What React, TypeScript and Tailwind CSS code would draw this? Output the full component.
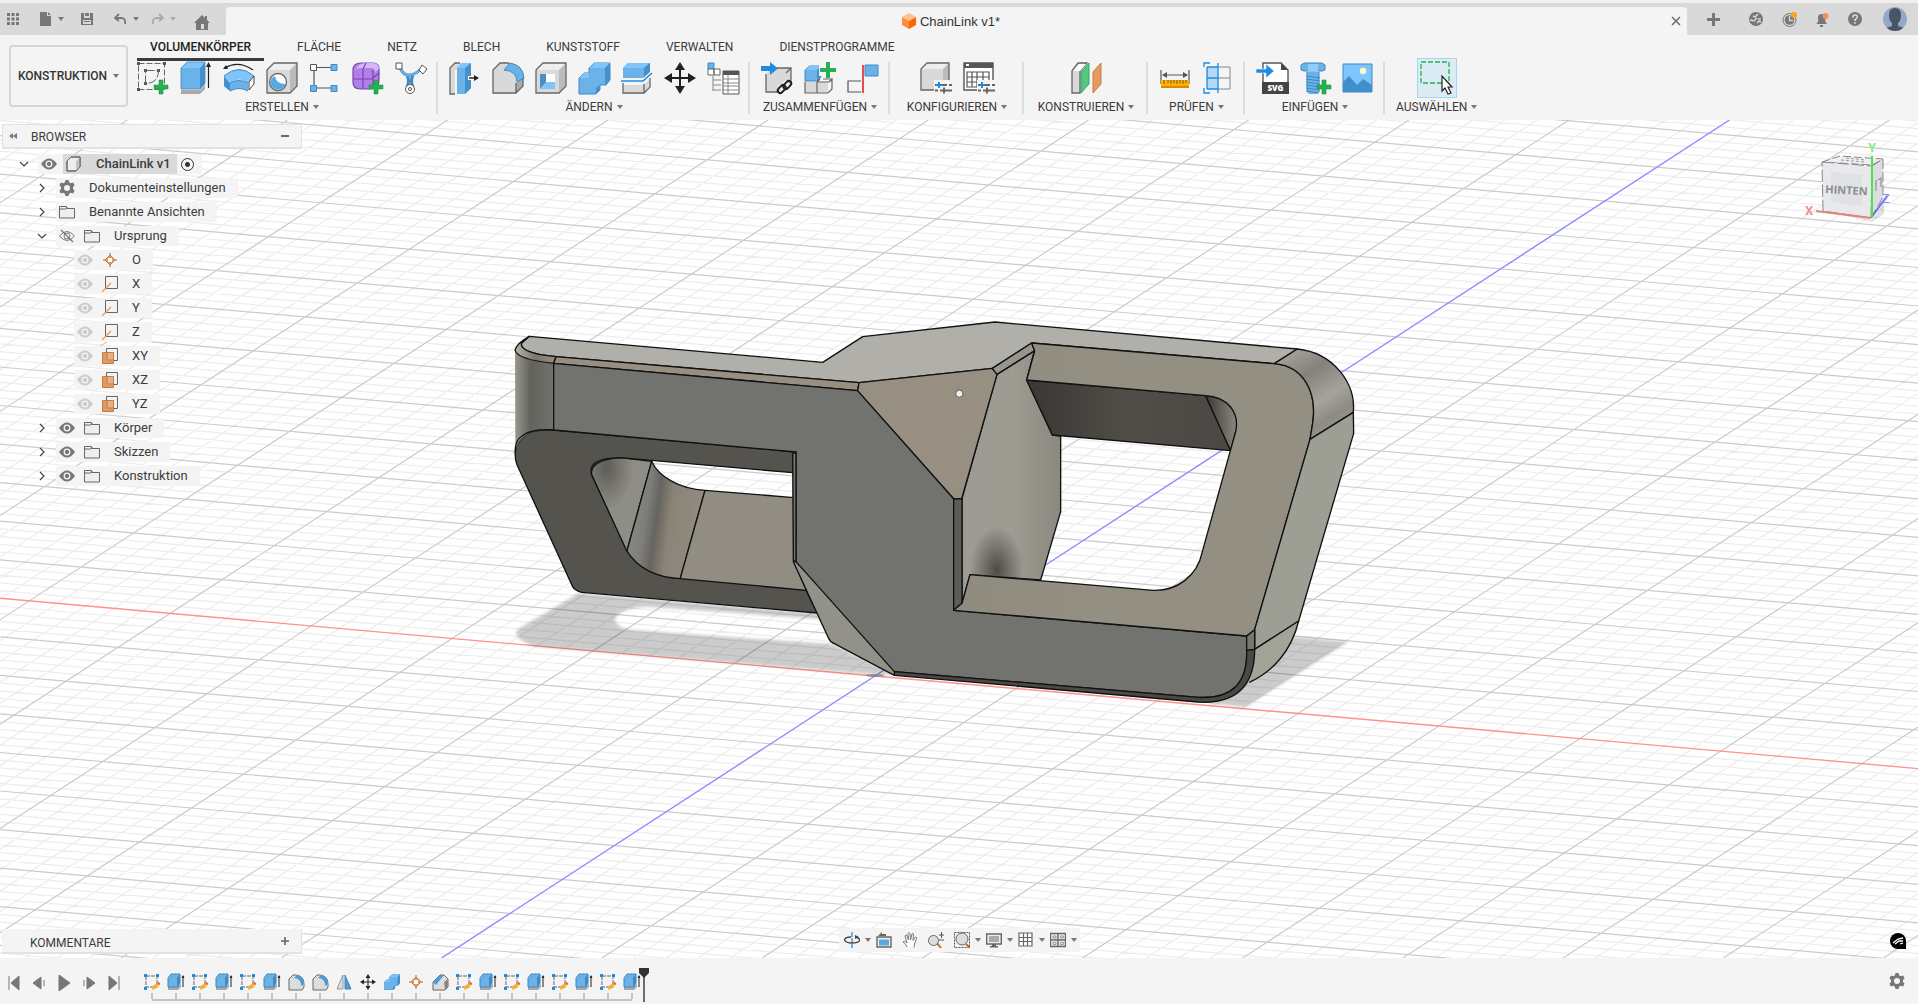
import { useState, type ReactNode } from "react";
import { clsx } from "clsx";

const tabs = [
  "VOLUMENKÖRPER",
  "FLÄCHE",
  "NETZ",
  "BLECH",
  "KUNSTSTOFF",
  "VERWALTEN",
  "DIENSTPROGRAMME",
];

/* ---------- ribbon icons, 32x32 ---------- */

const Plus = ({ x, y }: { x: number; y: number }) => (
  <path
    d={`M${x + 5} ${y}h4v5h5v4h-5v5h-4v-5h-5v-4h5z`}
    fill="#26b050"
    stroke="#1f9a45"
    strokeWidth=".6"
  />
);

const Sliders = () => (
  <>
    <path d="M14 18h18v14h-18z" fill="#f4f4f4" />
    <path d="M15 23h12M20 28.5h12M29 23h3M15 28.5h3" stroke="#666" strokeWidth="1.8" />
    <path d="M24 25.5v6" stroke="#666" strokeWidth="2" />
    <path d="M19 20v6M16 23h6" stroke="#1b8be4" strokeWidth="2" />
  </>
);

const icons: Record<string, ReactNode> = {
  sketch: (
    <>
      <path d="M1.5 1.5h26v26h-26z" fill="none" stroke="#666" strokeDasharray="6 2" />
      <path d="M0 0h3v3H0zM26 0h3v3h-3zM0 26h3v3H0zM7 7h3v3H7zM20 7h3v3h-3zM7 20h3v3H7z" fill="#555" />
      <path d="M8.5 8.5h13q0 13-13 13z" fill="none" stroke="#666" strokeDasharray="9 2" />
      <Plus x={17} y={18} />
    </>
  ),
  extrude: (
    <>
      <path d="M1 28h19l5-5v4l-5 5H1z" fill="#aaa" />
      <path d="M1 6l6-6h18l-5 6z" fill="#7fc4fb" />
      <path d="M20 6l5-6v22l-5 5z" fill="#4590cb" />
      <path d="M1 6h19v21H1z" fill="#6ab2e8" />
      <path d="M1 6l6-6h18v21l-5 6H1z" fill="none" stroke="#3f8ac4" strokeWidth=".8" />
      <path d="M28.5 26V3" stroke="#222" strokeWidth="1.2" />
      <path d="M26 5l2.5-5 2.5 5z" fill="#222" />
    </>
  ),
  revolve: (
    <>
      <path d="M1 14q15-13 30 0l-6 7q-9-7-17 0z" fill="#7fc4fb" />
      <path d="M1 14l6 7v8l-6-5zM7 21q9-5 18 0v8q-9-5-18 0z" fill="#6ab2e8" />
      <path d="M1 14l6 7v8l-6-5z" fill="#4590cb" />
      <path d="M1 14q15-13 30 0M7 21q9-5 18 0M7 29q9-5 18 0" fill="none" stroke="#3f8ac4" />
      <path d="M26 20l5-6v8l-5 6z" fill="#fff" stroke="#444" />
      <path d="M2 6q13-8 28 2" fill="none" stroke="#222" strokeWidth="1.2" />
      <path d="M0 7l3-4 2 4z" fill="#222" />
    </>
  ),
  hole: (
    <>
      <path d="M1 8l7-7h23l-7 7z" fill="#eee" />
      <path d="M24 8l7-7v23l-7 7z" fill="#bbb" />
      <path d="M1 8h23v23H1z" fill="#d9d9d9" />
      <path d="M1 8l7-7h23v23l-7 7H1z" fill="none" stroke="#666" strokeWidth="1.3" />
      <circle cx="12" cy="20" r="8.5" fill="#fff" stroke="#666" strokeWidth="1.3" />
      <path d="M9 14q1 8 11 8a8 7 0 1 1-11-8z" fill="#5aa8e2" />
    </>
  ),
  pattern: (
    <>
      <path d="M5 8v16M8 5.5h14M8 26h14" stroke="#555" strokeWidth="1.2" />
      <path d="M1.5 2.5h6v6h-6z" fill="#fff" stroke="#555" />
      <path d="M22 2.5h6v6h-6zM1.5 23.5h6v6h-6zM22 23.5h6v6h-6z" fill="#6ab2e8" stroke="#3f8ac4" />
    </>
  ),
  form: (
    <>
      <path d="M1 8q0-7 8-7h12q6 0 6 6v11q0 9-9 9H8q-7 0-7-7z" fill="#b27fe8" stroke="#7445ab" strokeWidth="1.2" />
      <path d="M6 4q3-3 9-3h6q6 0 6 6l-4 3q0-4-4-4H8q-3 0-5 3z" fill="#d7b6f8" />
      <path d="M2 17h18l7-6M11 7v20M14 1l-3 6M21 8v18" fill="none" stroke="#7445ab" strokeWidth="1.2" />
      <Plus x={17} y={18} />
    </>
  ),
  generative: (
    <>
      <path d="M5 6q4 8 10 7t11-6M12 13q3 6 0 12M18 13q-3 6 0 12" fill="none" stroke="#3f8ac4" strokeWidth="3" />
      <path d="M5 6q4 8 10 7t11-6" fill="none" stroke="#6ab2e8" strokeWidth="1.8" />
      <path d="M1 1h6v6H1zM27 3l5 4-4 5-4-4z" fill="#fff" stroke="#555" />
      <circle cx="15" cy="27" r="4.5" fill="#fff" stroke="#555" />
      <circle cx="15" cy="27" r="1.5" fill="none" stroke="#555" />
    </>
  ),
  presspull: (
    <>
      <path d="M1 6l5-5h6v5L6 8v24H1z" fill="#d9d9d9" />
      <path d="M6 32H1V6l5-5h5" fill="none" stroke="#666" strokeWidth="1.3" />
      <path d="M8 6l5-5h9v25l-6 6H8z" fill="#6ab2e8" />
      <path d="M8 6l5-5h9l-6 5z" fill="#7fc4fb" />
      <path d="M16 6l6-5v25l-6 6z" fill="#4590cb" />
      <path d="M19 16h7" stroke="#fff" strokeWidth="4" />
      <path d="M20 16h6" stroke="#222" strokeWidth="1.5" />
      <path d="M25 13l5 3-5 3z" fill="#222" />
    </>
  ),
  fillet: (
    <>
      <path d="M1 8l7-7h9q14 2 14 15v8l-7 7H1z" fill="#d9d9d9" />
      <path d="M24 21l7-5v8l-7 7z" fill="#aaa" />
      <path d="M12 8l6-7q13 2 14 15l-7 4Q25 9 12 8z" fill="#6ab2e8" stroke="#3f8ac4" />
      <path d="M17 1H8L1 8v23h23l7-7v-8M24 31V21" fill="none" stroke="#666" strokeWidth="1.3" />
    </>
  ),
  shell: (
    <>
      <path d="M1 8l7-7h23l-7 7z" fill="#eee" />
      <path d="M24 8l7-7v23l-7 7z" fill="#bbb" />
      <path d="M1 8h23v23H1z" fill="#d9d9d9" />
      <path d="M1 8l7-7h23v23l-7 7H1z" fill="none" stroke="#666" strokeWidth="1.3" />
      <path d="M5 12h15v15H5z" fill="#fff" />
      <path d="M5 12h6v9l-6 6z" fill="#4590cb" />
      <path d="M5 27l6-7h9v7z" fill="#7fc4fb" />
    </>
  ),
  combine: (
    <>
      <path d="M11 6l5-5h16v17l-4 5h-6v5l-4 4H1V16l5-5h5z" fill="#6ab2e8" stroke="#3f8ac4" />
      <path d="M11 6l5-5h16l-5 5zM1 16l5-5h5v5z" fill="#7fc4fb" />
      <path d="M27 6l5-5v17l-5 5zM18 26l4-3v5l-4 4z" fill="#4590cb" />
    </>
  ),
  split: (
    <>
      <path d="M2 23h20l6-5v6l-5 7H2z" fill="#d9d9d9" />
      <path d="M2 17v14h21l6-6v-9M23 31v-9" fill="none" stroke="#666" strokeWidth="1.3" />
      <path d="M2 6l5-5h22v9l-6 6H2z" fill="#6ab2e8" />
      <path d="M2 6l5-5h22l-6 5z" fill="#7fc4fb" />
      <path d="M23 6l6-5v9l-6 6z" fill="#4590cb" />
      <path d="M0 19h22l9-8" fill="none" stroke="#f4f4f4" strokeWidth="4" />
      <path d="M0 19h22l9-8" fill="none" stroke="#1b8be4" strokeWidth="1.6" />
    </>
  ),
  move: (
    <>
      <path d="M16 5v22M5 16h22" stroke="#222" strokeWidth="2" />
      <path d="M16 0l5 8H11zM16 32l5-8H11zM0 16l8-5v10zM32 16l-8-5v10z" fill="#222" />
    </>
  ),
  params: (
    <>
      <path d="M1 1h6v6H1z" fill="#6ab2e8" stroke="#3f8ac4" />
      <path d="M1 7h6v6H1zM7 7h6v6H7z" fill="#fff" stroke="#666" />
      <path d="M6 14v15M6 18h8M6 23h8M6 28h8" fill="none" stroke="#888" />
      <path d="M16 9h16v23H16z" fill="#fff" stroke="#555" />
      <path d="M16 9h16v4H16z" fill="#555" />
      <path d="M16 17h16M16 21h16M16 24h16M16 28h16M21 13v19" stroke="#888" />
    </>
  ),
  insertlink: (
    <>
      <path d="M5 12l5-6h20v17l-5 6H5z" fill="#d9d9d9" />
      <path d="M5 12v18h12M14 6h16v14M25 11l5-5" fill="none" stroke="#666" strokeWidth="1.3" />
      <path d="M0 4h9V0l8 6.5L9 13V9H0z" fill="#1b8be4" />
      <path d="M20 28L28 22" stroke="#f4f4f4" strokeWidth="10" />
      <g fill="none" stroke="#222" strokeWidth="2">
        <rect x="16" y="25" width="9" height="5" rx="2.5" transform="rotate(-45 20 27)" />
        <rect x="22" y="20" width="9" height="5" rx="2.5" transform="rotate(-45 27 23)" />
      </g>
    </>
  ),
  component: (
    <>
      <path d="M1 20h27v-3l-4 3v11H1z" fill="#d9d9d9" />
      <path d="M1 20v11h23l4-4V17M13 20v11M13 20h12l3-3h-9M13 20l3-3" fill="none" stroke="#666" strokeWidth="1.2" />
      <path d="M1 8l4-4h12v11l-4 4H1z" fill="#6ab2e8" stroke="#3f8ac4" />
      <path d="M1 8l4-4h12l-4 4z" fill="#7fc4fb" />
      <path d="M13 8l4-4v11l-4 4z" fill="#4590cb" />
      <path d="M15 3h18v11H15z" fill="#f4f4f4" />
      <path d="M22 0h4v6h6v4h-6v6h-4v-6h-6V6h6z" fill="#26b050" />
    </>
  ),
  joint: (
    <>
      <path d="M18 3h13v11H18z" fill="#6ab2e8" stroke="#3f8ac4" />
      <path d="M14 19H1v11h13" fill="none" stroke="#555" strokeWidth="1.2" />
      <path d="M16 3v28" stroke="#d22" strokeWidth="1.6" />
    </>
  ),
  configure: (
    <>
      <path d="M1 7l6-6h22l-6 6z" fill="#eee" />
      <path d="M23 7l6-6v20l-6 7z" fill="#bbb" />
      <path d="M1 7h22v21H1z" fill="#d9d9d9" />
      <path d="M23 28H1V7l6-6h22v21" fill="none" stroke="#666" strokeWidth="1.3" />
      <Sliders />
    </>
  ),
  configtable: (
    <>
      <path d="M1 1h29v27H1z" fill="#fff" stroke="#555" strokeWidth="1.4" />
      <path d="M1 1h29v5H1z" fill="#555" />
      <path d="M3 2h3v2H3z" fill="#fff" />
      <path d="M4 10h22v15H4zM4 15h22M4 20h22M9 10v15M14 10v15M20 10v15" fill="none" stroke="#555" strokeWidth="1.2" />
      <Sliders />
    </>
  ),
  plane: (
    <>
      <path d="M2 9l6-8h9l-7 8v22H2z" fill="#d9d9d9" stroke="#666" strokeWidth="1.3" />
      <path d="M3 9l6-7h7l-6 7z" fill="#fff" />
      <path d="M11 10l8-9v21l-8 9z" fill="#57c77f" stroke="#3aa563" />
      <path d="M23 10l8-9v21l-8 9z" fill="#e69a62" stroke="#c67a43" />
    </>
  ),
  measure: (
    <>
      <path d="M2 8v14M30 8v14M4 13h24" stroke="#555" strokeWidth="1.2" />
      <path d="M3 13l5-3v6zM29 13l-5-3v6z" fill="#555" />
      <path d="M2 18h28v7H2z" fill="#ffaf0a" />
      <path d="M2 24h28v2H2z" fill="#d98a00" />
      <path d="M5 18v4M9 18v3M12 18v4M15 18v3M18 18v4M21 18v3M24 18v4M27 18v3" stroke="#7a5a10" />
    </>
  ),
  interference: (
    <>
      <path d="M16 5h12v22H16M16 16h12" fill="none" stroke="#888" />
      <path d="M5 5h11v22H5z" fill="#b4d8f5" />
      <path d="M8 1H2v4M2 26v5h6M5 5h11M5 16h11M5 27h11M5 5v22M16 1v30" fill="none" stroke="#1b8be4" strokeWidth="1.3" />
    </>
  ),
  svg: (
    <>
      <path d="M7 1h18l7 7v23H7z" fill="#fff" stroke="#555" strokeWidth="1.4" />
      <path d="M25 1v7h7z" fill="#444" />
      <path d="M6 20h27v12H6z" fill="#444" />
      <path d="M0 7h10V2l8 7-8 7v-5H0z" fill="#1b8be4" stroke="#f4f4f4" strokeWidth=".6" />
      <text x="19.5" y="29" textAnchor="middle" className="font-['Open_Sans'] text-[8px] font-extrabold" fill="#fff">
        SVG
      </text>
    </>
  ),
  screw: (
    <>
      <path d="M2 3l3-2h18l3 2v5l-3 1H5L2 8z" fill="#6ab2e8" stroke="#3f8ac4" />
      <path d="M9 2h10v7H9z" fill="#90cdfa" />
      <path d="M8 10h12v20l-2 2h-8l-2-2z" fill="#6ab2e8" />
      <path d="M7 14l14 2M7 17l14 2M7 20l14 2M7 23l14 2M7 26l14 2M8 29l12 2M8 10v20M20 10v20" stroke="#3f8ac4" />
      <Plus x={18} y={18} />
    </>
  ),
  image: (
    <>
      <path d="M1 2h29v28H1z" fill="#7fc4fb" stroke="#3f8ac4" />
      <circle cx="21" cy="9" r="3.2" fill="#fffbd0" />
      <path d="M1 20l6-6 8 9 6-6 9 6v7H1z" fill="#3f8fcb" />
    </>
  ),
  select: (
    <>
      <path d="M0 0h28v21H0z" fill="none" stroke="#26b050" strokeWidth="1.3" strokeDasharray="5 2" />
      <path d="M21 14v15l3-3 3 6 3-1-3-6h4z" fill="#fff" stroke="#222" strokeWidth="1.2" />
    </>
  ),
};

const groups = [
  { label: "ERSTELLEN", tools: ["sketch", "extrude", "revolve", "hole", "pattern", "form", "generative"] },
  { label: "ÄNDERN", tools: ["presspull", "fillet", "shell", "combine", "split", "move", "params"] },
  { label: "ZUSAMMENFÜGEN", tools: ["insertlink", "component", "joint"] },
  { label: "KONFIGURIEREN", tools: ["configure", "configtable"], width: "min-w-[134px]" },
  { label: "KONSTRUIEREN", tools: ["plane"], width: "min-w-[124px]" },
  { label: "PRÜFEN", tools: ["measure", "interference"] },
  { label: "EINFÜGEN", tools: ["svg", "screw", "image"] },
  { label: "AUSWÄHLEN", tools: ["select"] },
];

const Caret = ({ className = "text-[#777]" }: { className?: string }) => (
  <svg viewBox="0 0 6 4" className={clsx("h-1 w-1.5 shrink-0", className)}>
    <path d="M0 0h6L3 4z" fill="currentColor" />
  </svg>
);

/* ---------- title bar ---------- */

function TitleBar() {
  return (
    <div className="border-t-[3px] border-[#f0f0f0] bg-[#d9d9d9] text-[#777]">
      <div className="flex h-8 items-stretch">
        <div className="flex w-[226px] shrink-0 items-center pl-[7px]">
          <button aria-label="Datenbereich">
            <svg viewBox="0 0 12 12" className="size-3" fill="currentColor">
              <path d="M0 0h3v3H0zM4.5 0h3v3h-3zM9 0h3v3H9zM0 4.5h3v3H0zM4.5 4.5h3v3h-3zM9 4.5h3v3H9zM0 9h3v3H0zM4.5 9h3v3h-3zM9 9h3v3H9z" />
            </svg>
          </button>
          <button aria-label="Datei" className="ml-5 flex items-center gap-1.5">
            <svg viewBox="0 0 13 14" className="h-3.5 w-[13px]" fill="currentColor">
              <path d="M1 0h7v4h4v10H1zM9 0l3 3H9z" />
            </svg>
            <Caret />
          </button>
          <button aria-label="Speichern" className="ml-4">
            <svg viewBox="0 0 14 14" className="size-3.5" fill="currentColor">
              <path fillRule="evenodd" d="M1 1h3v5h6V1h3v12H1zM5 1h4v3H5zM3 8v4h8V8zM4 9h6v1H4z" />
            </svg>
          </button>
          <button aria-label="Rückgängig" className="ml-5 flex items-center gap-1.5">
            <svg viewBox="0 0 13 12" className="h-3 w-[13px]" fill="none" stroke="currentColor" strokeWidth="1.8">
              <path d="M5 1L1 5l4 3M1 5h6q5 0 4 6" />
            </svg>
            <Caret />
          </button>
          <button aria-label="Wiederholen" className="ml-3 flex items-center gap-1.5 text-[#aaa]">
            <svg viewBox="0 0 13 12" className="h-3 w-[13px]" fill="none" stroke="currentColor" strokeWidth="1.8">
              <path d="M8 1l4 4-4 3M12 5H6q-5 0-4 6" />
            </svg>
            <Caret className="text-[#aaa]" />
          </button>
          <button aria-label="Startseite" className="mt-1.5 ml-[18px]">
            <svg viewBox="0 0 16 15" className="h-[15px] w-4" fill="currentColor">
              <path fillRule="evenodd" d="M8 0l3 3V1h2v4l3 3h-2v7H2V8H0zM7 9v5h3V9z" />
            </svg>
          </button>
        </div>

        <div className="mt-1 flex flex-1 items-center rounded-t bg-[#f4f4f4] pr-[7px] pl-2.5">
          <div className="flex flex-1 items-center justify-center gap-1 pr-1.5">
            <svg viewBox="0 0 14 16" className="h-4 w-3.5">
              <path d="M7 0l7 4-7 4-7-4z" fill="#ffc08f" />
              <path d="M0 4l7 4v8l-7-4z" fill="#ff8d3c" />
              <path d="M14 4L7 8v8l7-4z" fill="#f46a00" />
            </svg>
            <span className="pt-px font-['Liberation_Sans',sans-serif] text-[#333]">ChainLink v1*</span>
          </div>
          <button aria-label="Schließen">
            <svg viewBox="0 0 8 8" className="size-2 overflow-visible" stroke="#666" strokeWidth="1.4">
              <path d="M0 0l8 8M8 0L0 8" />
            </svg>
          </button>
        </div>

        <div className="flex w-[231px] shrink-0 items-center pl-5">
          <button aria-label="Neue Konstruktion" className="w-[42px]">
            <svg viewBox="0 0 13 13" className="size-[13px]" stroke="currentColor" strokeWidth="3">
              <path d="M6.5 0v13M0 6.5h13" />
            </svg>
          </button>
          <button aria-label="Erweiterungen" className="w-[33px]">
            <svg viewBox="0 0 14 14" className="size-3.5">
              <circle cx="7" cy="7" r="7" fill="currentColor" />
              <path d="M1 8l4 1M5 9l3-3M4 4l2 1 3-3M9 7h3M8 11l2-2 2 1" stroke="#d9d9d9" strokeWidth="1.5" fill="none" />
            </svg>
          </button>
          <button aria-label="Auftragsstatus" className="w-[33px]">
            <svg viewBox="0 0 15 15" className="size-[15px]">
              <circle cx="7.5" cy="8" r="6.5" fill="#d9d9d9" stroke="currentColor" />
              <circle cx="7.5" cy="8" r="4.8" fill="currentColor" />
              <path d="M7.5 4v4.5H11" stroke="#d9d9d9" strokeWidth="1.3" fill="none" />
              <circle cx="12" cy="3" r="3" fill="#ffa21f" />
            </svg>
          </button>
          <button aria-label="Benachrichtigungen" className="w-[33px]">
            <svg viewBox="0 0 14 15" className="h-[15px] w-3.5">
              <path d="M1 12q3-2 2-6 0-4 3.5-4T10 6q0 4 2 6zM5 13h3v2H5z" fill="currentColor" />
              <circle cx="10.5" cy="4" r="3" fill="#ff8a4f" />
            </svg>
          </button>
          <button aria-label="Hilfe" className="w-[35px]">
            <svg viewBox="0 0 14 14" className="size-3.5">
              <circle cx="7" cy="7" r="7" fill="currentColor" />
              <path d="M4.8 5.5q0-2.5 2.3-2.5t2.2 2.1Q9.3 6.5 7 7.6V9M7 10v1.8" stroke="#d9d9d9" strokeWidth="1.6" fill="none" />
            </svg>
          </button>
          <button aria-label="Profil">
            <svg viewBox="0 0 24 24" className="size-6">
              <clipPath id="avatar">
                <circle cx="12" cy="12" r="12" />
              </clipPath>
              <g clipPath="url(#avatar)">
                <path d="M0 0h24v24H0z" fill="#94a9c7" />
                <path d="M6 8q0-7 6-7t6 7q0 6-3 8v3l6 2v4H3v-4l6-2v-3Q6 14 6 8z" fill="#475566" />
              </g>
            </svg>
          </button>
        </div>
      </div>
    </div>
  );
}

/* ---------- ribbon ---------- */

function Ribbon() {
  const [active, setActive] = useState(tabs[0]);

  return (
    <div className="flex h-[85px] bg-[#f4f4f4] text-xs">
      <div className="shrink-0 px-[9px] py-2.5">
        <button className="flex h-[62px] w-[119px] items-center justify-center gap-1.5 rounded border-2 border-[#d6d6d6] font-medium text-[#333]">
          KONSTRUKTION <Caret />
        </button>
      </div>
      <div>
        <nav className="flex gap-5">
          {tabs.map((tab) => (
            <button
              key={tab}
              onClick={() => setActive(tab)}
              className={clsx(
                "h-[26px] border-b-[3px] px-[13px] leading-6",
                tab === active ? "border-[#3c3c3c] font-medium text-[#222]" : "border-transparent",
              )}
            >
              {tab}
            </button>
          ))}
        </nav>
        <div className="mt-px flex h-[52px]">
          {groups.map((group, i) => (
            <div
              key={group.label}
              className={clsx(
                "flex flex-col items-center pr-[9px]",
                group.width,
                i === 0 ? "pl-0" : "pl-[11px]",
                i < groups.length - 1 && "border-r-2 border-[#dcdcdc]",
              )}
            >
              <div className="flex gap-[11px]">
                {group.tools.map((tool) => (
                  <button
                    key={tool}
                    aria-label={tool}
                    className={clsx(tool === "select" && "-m-1 border border-[#a5d5ec] bg-[#dcecf5] p-[3px]")}
                  >
                    <svg viewBox="0 0 32 32" className="size-8 overflow-visible">
                      {icons[tool]}
                    </svg>
                  </button>
                ))}
              </div>
              <button className="mt-1 flex items-center gap-1 leading-[18px]">
                {group.label} <Caret />
              </button>
            </div>
          ))}
        </div>
      </div>
    </div>
  );
}

/* ---------- 3D view ---------- */

const ORIGIN = { x: 875, y: 676 };
const X_SLOPE = 0.0888;
const Z_SLOPE = -0.6508;

function Grid() {
  const minor: string[] = [];
  const major: string[] = [];
  for (let k = -85; k <= 60; k++) {
    if (k === 0) continue;
    const left = ORIGIN.y - ORIGIN.x * X_SLOPE + k * 7.71;
    (k % 5 === 0 ? major : minor).push(`M0 ${left.toFixed(1)}L1918 ${(left + 1918 * X_SLOPE).toFixed(1)}`);
  }
  for (let k = -60; k <= 60; k++) {
    if (k === 0) continue;
    const x = ORIGIN.x + k * 32.04;
    const top = x + (120 - ORIGIN.y) / Z_SLOPE;
    const bottom = x + (958 - ORIGIN.y) / Z_SLOPE;
    (k % 5 === 0 ? major : minor).push(`M${top.toFixed(1)} 120L${bottom.toFixed(1)} 958`);
  }
  return (
    <g fill="none">
      <path d={minor.join("")} stroke="#ececec" strokeWidth="1.2" />
      <path d={major.join("")} stroke="#cbcbcb" strokeWidth="1.2" />
    </g>
  );
}

function ChainLink() {
  return (
    <g transform="translate(500 300) scale(.33333)">
      <defs>
        <linearGradient id="endRound">
          <stop offset="0" stopColor="#99988f" />
          <stop offset=".4" stopColor="#63625c" />
          <stop offset="1" stopColor="#72736e" />
        </linearGradient>
        <linearGradient id="endChamfer">
          <stop offset="0" stopColor="#b5b3aa" />
          <stop offset=".5" stopColor="#7c766b" />
          <stop offset="1" stopColor="#978f81" />
        </linearGradient>
        <linearGradient id="innerBend" x1="0" y1=".4" x2="1" y2=".6">
          <stop offset="0" stopColor="#8d8c85" />
          <stop offset=".25" stopColor="#7d7d7a" />
          <stop offset=".38" stopColor="#66645e" />
          <stop offset=".55" stopColor="#8b8377" />
          <stop offset="1" stopColor="#928e82" />
        </linearGradient>
        <radialGradient id="innerLeft" cx=".25" cy=".1" r=".45">
          <stop offset="0" stopColor="#5c5b56" />
          <stop offset="1" stopColor="#8f8e86" />
        </radialGradient>
        <linearGradient id="webWall" x1="0" y1="0" x2="1" y2="0">
          <stop offset="0" stopColor="#9c9b93" />
          <stop offset=".5" stopColor="#9e9b92" />
          <stop offset="1" stopColor="#8b8880" />
        </linearGradient>
        <radialGradient id="webSpot">
          <stop offset="0" stopColor="#4c4b46" />
          <stop offset="1" stopColor="#4c4b46" stopOpacity="0" />
        </radialGradient>
        <linearGradient id="underside">
          <stop offset="0" stopColor="#393733" />
          <stop offset=".5" stopColor="#514e49" />
          <stop offset="1" stopColor="#4a4843" />
        </linearGradient>
        <linearGradient id="cornerIn">
          <stop offset="0" stopColor="#3b3935" />
          <stop offset="1" stopColor="#8b897f" />
        </linearGradient>
        <linearGradient id="cornerOut" x1=".2" y1="0" x2=".75" y2="1">
          <stop offset="0" stopColor="#a6a49e" />
          <stop offset=".3" stopColor="#85817b" />
          <stop offset=".6" stopColor="#a4a49c" />
          <stop offset=".8" stopColor="#8e8a83" />
          <stop offset="1" stopColor="#9f9f96" />
        </linearGradient>
        <linearGradient id="frameFace" x1="0" y1="0" x2=".4" y2="0">
          <stop offset="0" stopColor="#8f8b7f" />
          <stop offset="1" stopColor="#948f83" />
        </linearGradient>
        <filter id="soft" x="-10%" y="-10%" width="120%" height="120%">
          <feGaussianBlur stdDeviation="5" />
        </filter>
        <clipPath id="webClip">
          <path d="M1491 223L1603 153L1580 240L1657 405L1682 408V635L1622 840L1410 824L1386 910V596Z" />
        </clipPath>
      </defs>

      <path
        filter="url(#soft)"
        fillRule="evenodd"
        fill="#000"
        opacity=".2"
        d="M235 880L50 990Q40 1020 110 1040L1100 1122L1190 1125L1003 1035L960 940ZM345 960Q350 925 440 920L960 958L1003 1033L400 990Q350 985 345 960ZM2380 1010L2545 1025L2235 1222L2120 1210Z"
      />
      <ellipse cx="1125" cy="1126" rx="28" ry="5" fill="#777" opacity=".7" />

      <g stroke="#111" strokeWidth="4" strokeLinejoin="round">
        {/* left half, rear to front */}
        <path fill="url(#innerLeft)" d="M275 525Q268 480 360 473L455 484L380 756Z" />
        <path fill="url(#innerBend)" d="M455 484C475 530 540 568 615 571L540 838C460 832 410 805 380 756Z" />
        <path fill="#928d82" d="M615 571L882 593V785L920 873L540 838Z" />
        <path
          fill="#55534d"
          fillRule="evenodd"
          d="M161 390L888 456L878 518L360 473Q260 475 275 525L380 752C410 800 460 832 540 836L918 871L952 939L245 877Q225 872 218 860L50 492C30 420 80 385 161 390Z"
        />
        <path fill="#b0afa9" d="M88 109L968 187L1088 110L1485 66L2392 147L2323 191L1595 129L1477 205L1077 248L168 170Q60 160 64 130Z" />
        <path fill="url(#endRound)" d="M45 150Q50 178 161 190V390Q50 388 46 460Z" stroke="none" />
        <path fill="none" d="M161 190V390C80 385 40 410 46 460" />
        <path fill="url(#endChamfer)" d="M88 109L64 130Q60 160 168 170L161 190Q50 178 45 150Q50 130 88 109Z" />
        <path fill="#978f81" d="M168 170L1077 248L1073 272L161 190Z" />
        <path fill="#93928a" d="M880 785L985 1013Q990 1025 1003 1031L1183 1126L1200 1100L888 785Z" />
        <path fill="#72736e" d="M161 190L1073 272L1362 597V931L2240 1008V1051Q2245 1200 2095 1192L1183 1115L888 785V456L161 390Z" />
        <path fill="#72736e" d="M878 462L888 456V785L880 782Z" />

        {/* right half */}
        <path fill="url(#webWall)" d="M1491 223L1603 153L1580 240L1657 405L1682 408V635L1622 840L1410 824L1386 910V596Z" />
        <ellipse cx="1490" cy="810" rx="80" ry="130" fill="url(#webSpot)" stroke="none" clipPath="url(#webClip)" />
        <path fill="#978f81" d="M1077 248L1477 205L1491 223L1385 596L1362 597L1073 272Z" />
        <path fill="#96958f" d="M1477 205L1595 129L1604 152L1491 223Z" />
        <path fill="#5d5c55" d="M1361 597L1386 596V910L1361 931Z" />
        <path fill="url(#underside)" d="M1580 240L2117 287L2192 452L1657 405Z" />
        <path fill="url(#cornerIn)" d="M2117 287C2190 292 2225 350 2207 395L2192 452Z" />
        <path
          fill="url(#frameFace)"
          d="M1595 129L2323 191C2410 198 2452 275 2438 370L2430 418L2264 989L2240 1008L1361 931L1386 910L1410 824L1960 871C2030 873 2092 830 2107 755L2207 395C2220 335 2180 290 2117 287L1580 240L1604 153Z"
        />
        <path fill="url(#cornerOut)" d="M2323 191L2392 147C2500 158 2568 250 2560 337L2430 418L2438 370C2452 275 2410 198 2323 191Z" />
        <path fill="#9d9e94" d="M2430 418L2560 337L2561 400L2396 963L2264 1048V989Z" />
        <path fill="#a3a398" stroke="none" d="M2264 1048L2396 963C2375 1050 2320 1115 2248 1147Q2264 1100 2264 1048Z" />
        <path fill="none" d="M2264 1048L2396 963C2375 1050 2320 1115 2248 1147" />
        <path fill="#77766f" d="M2240 1008L2264 989V1048L2240 1051Z" />
        <path
          fill="#4a4943"
          d="M1183 1115L2095 1192Q2245 1200 2240 1051L2264 1048Q2264 1205 2115 1207L2093 1206L1183 1126Z"
        />
      </g>
      <circle cx="1378" cy="281" r="11" fill="#eee" stroke="#555" strokeWidth="3" />
    </g>
  );
}

function ViewCube() {
  return (
    <g>
      <path d="M1822 210l50 10 12-18v12l-12 8z" fill="#000" opacity=".12" />
      <path d="M1822 162l18-6 43 3-11 6z" fill="#eeeff0" stroke="#888" strokeDasharray="8 3" />
      <path d="M1872 166l11-7v38l-12 21z" fill="#dcdddf" stroke="#888" strokeDasharray="10 3" />
      <path d="M1822 162l50 4-1 52-48-7z" fill="#e8e9eb" stroke="#888" strokeDasharray="12 3" />
      <path d="M1831 172l31 3v31l-31-4z" fill="#dfe1e5" />
      <path d="M1841 160l24 2M1846 158l20 2" stroke="#999" strokeDasharray="3 2" />
      <path d="M1876 180v11M1878 180l3-2v9" stroke="#999" fill="none" strokeWidth="1.3" />
      <text x="1825" y="193" transform="rotate(3 1825 193)" className="font-['Open_Sans'] text-[11px] font-bold" fill="#8b8e93">
        HINTEN
      </text>
      <path d="M1816 211l55 7" stroke="#e98080" strokeWidth="2" />
      <path d="M1871 218l16-22" stroke="#6d6df0" strokeWidth="2" />
      <path d="M1872 156v62" stroke="#4fe04f" strokeWidth="2" />
      <g className="font-['Roboto'] text-[13px]">
        <text x="1805" y="215" fill="#f09090" className="font-bold">X</text>
        <text x="1868" y="152" fill="#7df07d" className="font-bold">Y</text>
        <text x="1882" y="203" fill="#8a8af5">Z</text>
      </g>
    </g>
  );
}

function Canvas() {
  return (
    <svg viewBox="0 120 1918 838" preserveAspectRatio="xMidYMid slice" className="block size-full bg-white">
      <Grid />
      <path d="M0 598.3L1918 768.6" stroke="#ff9090" strokeWidth="1.4" />
      <path d="M441.5 958L1729.5 120" stroke="#8c8cff" strokeWidth="1.4" />
      <ChainLink />
      <ViewCube />
    </svg>
  );
}

/* ---------- browser tree ---------- */

type Node = {
  label: string;
  level: 0 | 1 | 2;
  icon: "body" | "gear" | "folder" | "origin" | "axis" | "plane";
  eye?: "on" | "off" | "dim";
  open?: boolean;
};

const nodes: Node[] = [
  { label: "ChainLink v1", level: 0, icon: "body", eye: "on", open: true },
  { label: "Dokumenteinstellungen", level: 1, icon: "gear" },
  { label: "Benannte Ansichten", level: 1, icon: "folder" },
  { label: "Ursprung", level: 1, icon: "folder", eye: "off", open: true },
  { label: "O", level: 2, icon: "origin", eye: "dim" },
  { label: "X", level: 2, icon: "axis", eye: "dim" },
  { label: "Y", level: 2, icon: "axis", eye: "dim" },
  { label: "Z", level: 2, icon: "axis", eye: "dim" },
  { label: "XY", level: 2, icon: "plane", eye: "dim" },
  { label: "XZ", level: 2, icon: "plane", eye: "dim" },
  { label: "YZ", level: 2, icon: "plane", eye: "dim" },
  { label: "Körper", level: 1, icon: "folder", eye: "on" },
  { label: "Skizzen", level: 1, icon: "folder", eye: "on" },
  { label: "Konstruktion", level: 1, icon: "folder", eye: "on" },
];

const GearShape = () => (
  <path
    fillRule="evenodd"
    fill="#777"
    d="M6.5 0h3l.6 2.3 1.7 1 2.3-.7 1.5 2.7L14 7v2l1.6 1.7-1.5 2.7-2.3-.7-1.7 1-.6 2.3h-3l-.6-2.3-1.7-1-2.3.7L.4 10.7 2 9V7L.4 5.3l1.5-2.7 2.3.7 1.7-1zM8 5a3 3 0 1 0 0 6 3 3 0 0 0 0-6z"
  />
);

const treeIcons: Record<Node["icon"], ReactNode> = {
  body: (
    <>
      <path d="M1 5l4-4h9v10l-4 4H1z" fill="#eee" stroke="#666" />
      <path d="M10 5l4-4v10l-4 4z" fill="#c4c4c4" />
      <path d="M1 5l4-4h9v10l-4 4H1z" fill="none" stroke="#666" />
    </>
  ),
  gear: <GearShape />,
  folder: <path d="M.5 2.5h7v2h8v9.500H.5zM.5 5h6l2-2" fill="#eee" stroke="#666" />,
  origin: (
    <>
      <path d="M8 1v14M1 8h14" stroke="#a86a3d" />
      <path d="M8 3l5 5-5 5-5-5z" fill="#e69a62" stroke="#c67a43" />
      <path d="M6 6h4v4H6z" fill="#fff" />
    </>
  ),
  axis: (
    <>
      <path d="M3.5.5h12v12h-12z" fill="#f4f4f4" stroke="#666" />
      <path d="M0 16l9-9" stroke="#e69a62" strokeWidth="1.3" />
    </>
  ),
  plane: (
    <>
      <path d="M4.5.5h11v12h-11z" fill="#f4f4f4" stroke="#666" />
      <path d="M.5 4.5h11v11H.5z" fill="#e69a62" stroke="#c67a43" />
      <path d="M5 4.5h6.5v7.5H5z" fill="#e3b18c" stroke="#c67a43" />
    </>
  ),
};

function Eye({ state }: { state: "on" | "off" | "dim" }) {
  const color = state === "dim" ? "#ccc" : "#777";
  return (
    <svg viewBox="0 0 16 16" className="size-4">
      {state === "off" ? (
        <g fill="none" stroke="#777">
          <path d="M.5 8Q8-1 15.5 8 8 17 .5 8z" />
          <circle cx="8" cy="8" r="3" />
          <path d="M2 2l12 12" strokeWidth="1.3" />
        </g>
      ) : (
        <>
          <path d="M0 8Q8-3 16 8 8 19 0 8z" fill={color} />
          <circle cx="8" cy="8" r="2.8" fill="none" stroke="#f4f4f4" strokeWidth="1.3" />
        </>
      )}
    </svg>
  );
}

const indent = ["pl-[18px]", "pl-9", "pl-[74px]"];

function TreeRow({ node }: { node: Node }) {
  const root = node.level === 0;
  return (
    <li className={clsx("flex h-6 items-center", indent[node.level])}>
      {node.level < 2 && (
        <button aria-label={node.open ? "Einklappen" : "Ausklappen"} className="w-5 pl-px">
          <svg viewBox="0 0 10 10" className="size-2.5" fill="none" stroke="#444" strokeWidth="1.2">
            <path d={node.open ? "M1 3l4 4 4-4" : "M3 1l4 4-4 4"} />
          </svg>
        </button>
      )}
      <div className="flex h-5 items-center bg-[#f4f4f4]">
        {node.eye && (
          <button aria-label="Sichtbarkeit" className="mr-1.5 ml-[3px]">
            <Eye state={node.eye} />
          </button>
        )}
        <div className={clsx("flex h-full items-center pl-[3px]", root ? "bg-[#d9d9d9] pr-1.5 font-medium" : "pr-3")}>
          <svg viewBox="0 0 16 16" className="mr-3.5 size-4">
            {treeIcons[node.icon]}
          </svg>
          <span>{node.label}</span>
        </div>
        {root && (
          <label className="mx-1 flex items-center pr-1">
            <input
              type="radio"
              name="active-component"
              aria-label="Komponente aktivieren"
              defaultChecked
              className="size-[13px] appearance-none rounded-full border border-[#333] bg-[radial-gradient(#333_2px,transparent_3px)]"
            />
          </label>
        )}
      </div>
    </li>
  );
}

function Browser() {
  return (
    <aside className="absolute top-1 left-0.5 w-[300px]">
      <header className="flex h-[25px] items-center border border-b-2 border-[#e2e2e2] bg-[#f4f4f4] px-1.5">
        <svg viewBox="0 0 8 6" className="h-1.5 w-2" fill="#777">
          <path d="M4 0v6L0 3zM8 0v6L4 3z" />
        </svg>
        <h2 className="ml-3.5 flex-1 pt-0.5 text-xs">BROWSER</h2>
        <button aria-label="Minimieren" className="mr-1.5 h-0.5 w-2 bg-[#666]" />
      </header>
      <ul className="mt-[3px] -ml-0.5">
        {nodes.map((node) => (
          <TreeRow key={node.label} node={node} />
        ))}
      </ul>
    </aside>
  );
}

/* ---------- navigation bar ---------- */

const navItems: { name: string; caret?: boolean; art: ReactNode }[] = [
  {
    name: "Orbit",
    caret: true,
    art: (
      <>
        <path d="M8 0v16" stroke="#6ab2e8" strokeWidth="2" strokeDasharray="5 1" />
        <path d="M12 5q4 1 3.5 3.5Q14 11 8 11T.5 8Q1 5 7 5" fill="none" stroke="#444" strokeWidth="1.4" />
        <path d="M11 3l4 2-4 2z" fill="#444" />
      </>
    ),
  },
  {
    name: "Ansehen",
    art: (
      <>
        <path d="M1 5h14v10H1z" fill="#eee" stroke="#666" strokeWidth="1.4" />
        <path d="M3 7.5h10v6H3z" fill="#5aa8e2" />
        <path d="M2 4l4-4v2h4v2z" fill="#666" />
      </>
    ),
  },
  {
    name: "Pan",
    art: (
      <path
        d="M5 15q-1-3-4-5 1-2 4 1L3 4q1-2 2 0l1.5 4L6 1.5q1-2 2 0L8.5 8 10 2q1.5-1 1.5.5L11 8.5 13.5 5q1.5 0 1 1.5L12.5 12l-.5 3.5"
        fill="#fff"
        stroke="#777"
      />
    ),
  },
  {
    name: "Zoom",
    art: (
      <>
        <path d="M9 11l4 5" stroke="#b07030" strokeWidth="2" />
        <circle cx="5.5" cy="8.5" r="5" fill="#ddd" stroke="#666" />
        <path d="M11 3h5M13.5 0v6M11 8h5" stroke="#555" />
      </>
    ),
  },
  {
    name: "Einpassen",
    caret: true,
    art: (
      <>
        <path d="M.5.5h15v15H.5z" fill="none" stroke="#555" strokeDasharray="2 1" />
        <path d="M12 12l4 4" stroke="#b07030" strokeWidth="2" />
        <circle cx="8" cy="7" r="6" fill="#ddd" stroke="#666" />
      </>
    ),
  },
  {
    name: "Anzeigeeinstellungen",
    caret: true,
    art: (
      <>
        <path d="M.7 2h14.6v10H.7z" fill="#eee" stroke="#666" strokeWidth="1.4" />
        <path d="M3 4h10v6H3z" fill="#aaa" />
        <path d="M6 12h4v2h2v1.5H4V14h2z" fill="#666" />
      </>
    ),
  },
  {
    name: "Raster",
    caret: true,
    art: <path d="M1 1h13v13H1zM1 5.5h13M1 9.5h13M5.5 1v13M9.5 1v13" fill="#fff" stroke="#666" strokeWidth="1.2" />,
  },
  {
    name: "Ansichtsfenster",
    caret: true,
    art: (
      <>
        <path d="M.5 1.5h15v13H.5zM.5 8h15M8 1.5v13" fill="#eee" stroke="#666" strokeWidth="1.4" />
        <path d="M3 4h3v2H3zM10.5 4h3v2h-3zM3 10.5h3v2H3zM10.5 10.5h3v2h-3z" fill="none" stroke="#999" />
      </>
    ),
  },
];

function NavBar() {
  return (
    <div className="absolute inset-x-0 bottom-1.5 flex justify-center">
      <div className="flex h-6 items-center bg-[#f4f4f4] pr-[3px]">
        {navItems.map((item) => (
          <button
            key={item.name}
            aria-label={item.name}
            className={clsx("flex items-center gap-[5px] pl-[5px]", !item.caret && "pr-[5px]")}
          >
            <svg viewBox="0 0 16 16" className="size-4">
              {item.art}
            </svg>
            {item.caret && <Caret />}
          </button>
        ))}
      </div>
    </div>
  );
}

/* ---------- timeline ---------- */

const timelineIcons: Record<string, ReactNode> = {
  sketch: (
    <>
      <path d="M2 2h11v11H2z" fill="none" stroke="#666" strokeDasharray="4 1" />
      <path d="M0 0h3v3H0zM12 0h3v3h-3zM0 13h3v3H0z" fill="#1b8be4" />
      <path d="M8 16l1-4 5-4 2 2-5 5z" fill="#ffb020" />
      <path d="M13 9l2-1 1 2-1 1z" fill="#e44" />
    </>
  ),
  extrude: (
    <>
      <path d="M0 13h10l3-3v3l-3 3H0z" fill="#aaa" />
      <path d="M0 4l3-4h9v9l-2 4H0z" fill="#6ab2e8" stroke="#3f8ac4" />
      <path d="M9 4l3-4v9l-3 4z" fill="#3f8ac4" />
      <path d="M15 13V2" stroke="#222" />
      <path d="M13.5 4L15 1l1.5 3z" fill="#222" />
    </>
  ),
  fillet: (
    <>
      <path d="M1 5l4-4h3q8 1 8 9v3l-2 3H1z" fill="#ddd" stroke="#666" />
      <path d="M6 4l3-3q7 1 7 9l-3 2q0-8-7-8z" fill="#4a9bd8" />
    </>
  ),
  mirror: (
    <>
      <path d="M7 1v14H1z" fill="#ddd" stroke="#999" />
      <path d="M9 1v14h6z" fill="#4a9bd8" stroke="#3f8ac4" />
    </>
  ),
  chamfer: (
    <>
      <path d="M1 8l7-7h4l4 4v8l-3 3H1z" fill="#ddd" stroke="#666" />
      <path d="M1 8l7-7h4L4 11z" fill="#4a9bd8" />
      <path d="M12 8l4-3v8l-3 3z" fill="#888" />
    </>
  ),
};

const steps = [
  "sketch", "extrude", "sketch", "extrude", "sketch", "extrude", "fillet", "fillet", "mirror", "move", "combine",
  "origin", "chamfer", "sketch", "extrude", "sketch", "extrude", "sketch", "extrude", "sketch", "extrude",
];

function StepIcon({ step }: { step: string }) {
  if (step === "move" || step === "combine") {
    return (
      <svg viewBox="0 0 32 32" className="size-4">
        {icons[step]}
      </svg>
    );
  }
  return (
    <svg viewBox="0 0 16 16" className="size-4 overflow-visible">
      {step === "origin" ? treeIcons.origin : timelineIcons[step]}
    </svg>
  );
}

const playback = [
  { name: "Zum Anfang", d: "M3 1v14M5 8l8-7v14z" },
  { name: "Schritt zurück", d: "M2 8l8-6v12zM13 5v6" },
  { name: "Abspielen", d: "M3 0l11 8-11 8z" },
  { name: "Schritt vor", d: "M3 5v6M6 2l8 6-8 6z" },
  { name: "Zum Ende", d: "M3 1l8 7-8 7zM13 1v14" },
];

function Timeline() {
  return (
    <footer className="flex h-[46px] bg-[#f4f4f4]">
      <div className="flex w-[140px] shrink-0 items-start gap-[9px] pt-[17px] pl-1.5">
        {playback.map((item) => (
          <button key={item.name} aria-label={item.name}>
            <svg viewBox="0 0 16 16" className="size-4" fill="#777" stroke="#777" strokeWidth="1">
              <path d={item.d} />
            </svg>
          </button>
        ))}
      </div>
      <ol className="flex">
        {steps.map((step, i) => (
          <li key={i} className="flex w-6 flex-col items-center pt-4">
            <StepIcon step={step} />
            <span className="mt-[3px] h-1.5 w-0.5 bg-[#c4c4c4]" />
            <span
              className={clsx(
                "h-0.5 bg-[#c4c4c4]",
                i === 0 ? "w-3 self-end" : i === steps.length - 1 ? "w-3 self-start" : "w-full",
              )}
            />
          </li>
        ))}
      </ol>
      <svg viewBox="0 0 10 34" className="mt-[10px] -ml-[5px] h-[34px] w-2.5 shrink-0">
        <path d="M0 0h10v5L5 10 0 5z" fill="#333" />
        <path d="M5 8v26" stroke="#333" strokeWidth="1.4" />
      </svg>
      <button aria-label="Zeitachseneinstellungen" className="mr-[13px] ml-auto self-center">
        <svg viewBox="0 0 16 16" className="size-4">
          <GearShape />
        </svg>
      </button>
    </footer>
  );
}

export default function App() {
  return (
    <div className="flex h-screen flex-col overflow-hidden font-['Roboto',sans-serif] text-[13px] text-[#3c3c3c]">
      <TitleBar />
      <Ribbon />
      <main className="relative min-h-0 flex-1">
        <Canvas />
        <Browser />
        <section className="absolute bottom-1 left-0.5 flex h-[25px] w-[300px] items-center border-r border-b-2 border-[#e2e2e2] bg-[#f4f4f4] pr-3 pl-7">
          <h2 className="flex-1 pt-1 text-xs">KOMMENTARE</h2>
          <button aria-label="Kommentar hinzufügen">
            <svg viewBox="0 0 8 8" className="size-2" stroke="#666" strokeWidth="1.6">
              <path d="M4 0v8M0 4h8" />
            </svg>
          </button>
        </section>
        <NavBar />
        <button aria-label="Assistent" className="absolute right-3 bottom-[9px]">
          <svg viewBox="0 0 16 16" className="size-4">
            <path d="M8 0a8 8 0 0 1 8 8v8H8A8 8 0 0 1 8 0z" fill="#000" />
            <path d="M3 10l5-4 5-1M5 11l4-3 4 0M10 11l3-1" stroke="#fff" strokeWidth="1.3" fill="none" />
          </svg>
        </button>
      </main>
      <Timeline />
    </div>
  );
}
